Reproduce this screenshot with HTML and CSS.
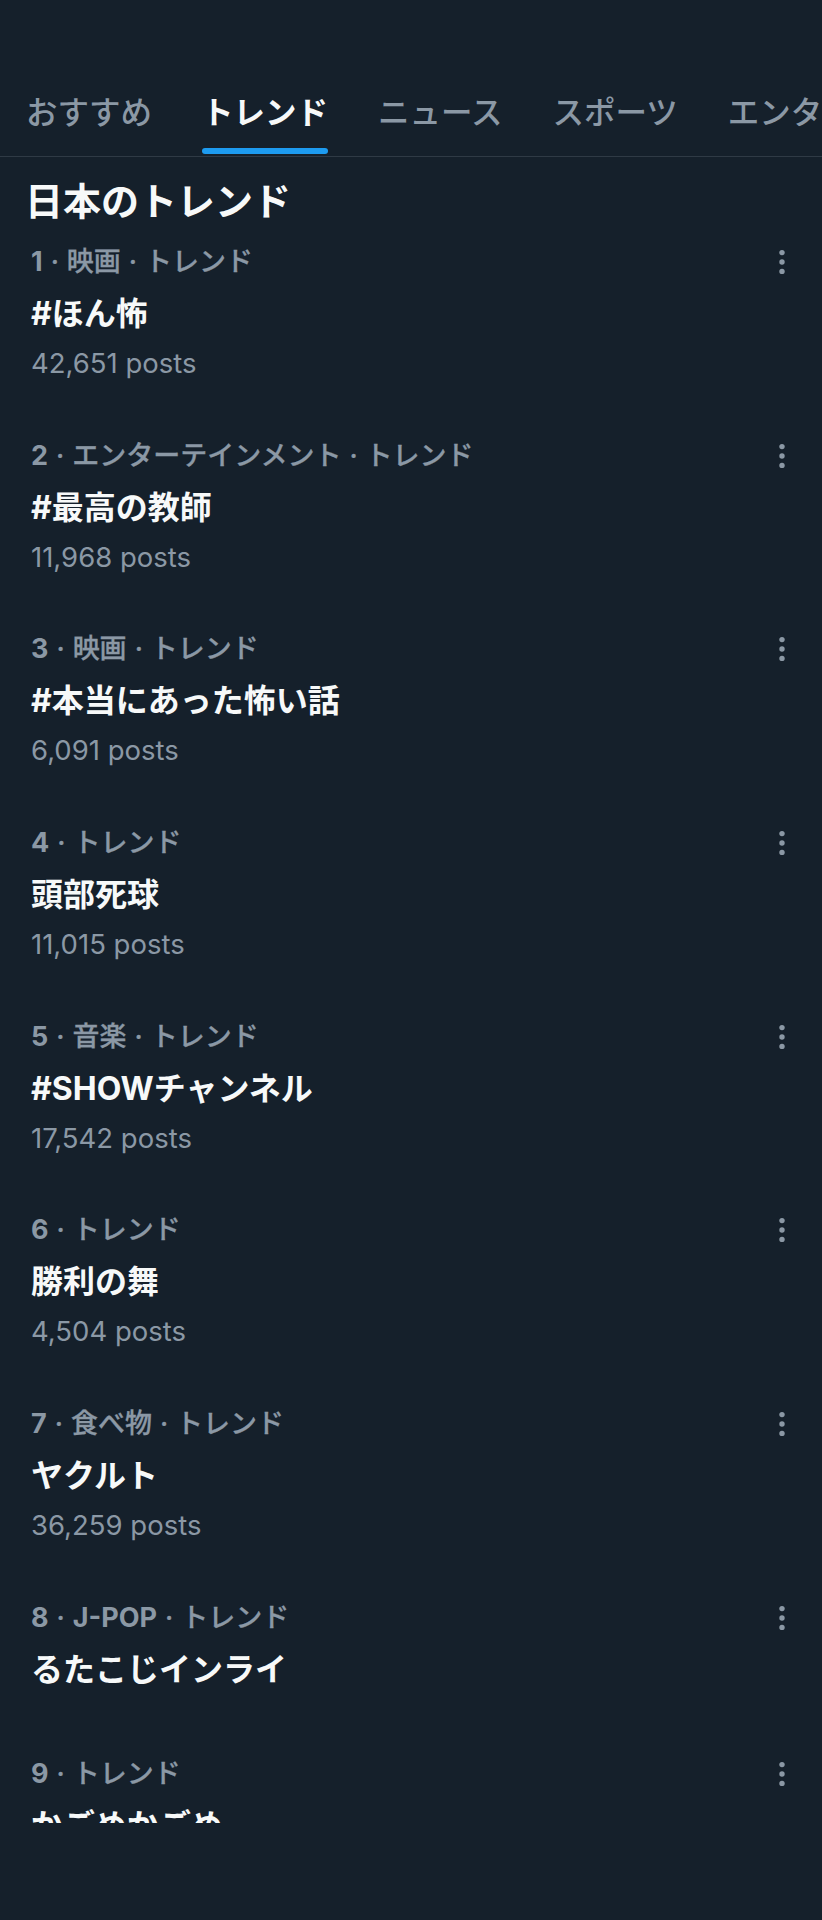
FILE: index.html
```html
<!DOCTYPE html>
<html lang="ja">
<head>
  <meta charset="UTF-8" />
  <meta name="viewport" content="width=device-width, initial-scale=1.0"/>
  <title>トレンド</title>
  <link rel="stylesheet" href="styles.css">
</head>
<body>
  <div class="statusbar"></div>

  <nav class="tabs">
    <a class="tab"><span class="tab-label">おすすめ</span></a>
    <a class="tab active"><span class="tab-label">トレンド</span></a>
    <a class="tab"><span class="tab-label">ニュース</span></a>
    <a class="tab"><span class="tab-label">スポーツ</span></a>
    <a class="tab"><span class="tab-label">エンターテインメント</span></a>
  </nav>

  <h2 class="section-title">日本のトレンド</h2>

  <div class="trends">
    <div class="trend">
      <div class="trend-meta">
        <span><b>1</b><span class="dot">·</span>映画<span class="dot">·</span>トレンド</span>
        <svg class="more" viewBox="0 0 20 44"><circle cx="10" cy="12.6" r="2.7"/><circle cx="10" cy="22" r="2.7"/><circle cx="10" cy="31.4" r="2.7"/></svg>
      </div>
      <div class="trend-name">#ほん怖</div>
      <div class="trend-count">42,651 posts</div>
    </div>

    <div class="trend">
      <div class="trend-meta">
        <span><b>2</b><span class="dot">·</span>エンターテインメント<span class="dot">·</span>トレンド</span>
        <svg class="more" viewBox="0 0 20 44"><circle cx="10" cy="12.6" r="2.7"/><circle cx="10" cy="22" r="2.7"/><circle cx="10" cy="31.4" r="2.7"/></svg>
      </div>
      <div class="trend-name">#最高の教師</div>
      <div class="trend-count">11,968 posts</div>
    </div>

    <div class="trend">
      <div class="trend-meta">
        <span><b>3</b><span class="dot">·</span>映画<span class="dot">·</span>トレンド</span>
        <svg class="more" viewBox="0 0 20 44"><circle cx="10" cy="12.6" r="2.7"/><circle cx="10" cy="22" r="2.7"/><circle cx="10" cy="31.4" r="2.7"/></svg>
      </div>
      <div class="trend-name">#本当にあった怖い話</div>
      <div class="trend-count">6,091 posts</div>
    </div>

    <div class="trend">
      <div class="trend-meta">
        <span><b>4</b><span class="dot">·</span>トレンド</span>
        <svg class="more" viewBox="0 0 20 44"><circle cx="10" cy="12.6" r="2.7"/><circle cx="10" cy="22" r="2.7"/><circle cx="10" cy="31.4" r="2.7"/></svg>
      </div>
      <div class="trend-name">頭部死球</div>
      <div class="trend-count">11,015 posts</div>
    </div>

    <div class="trend">
      <div class="trend-meta">
        <span><b>5</b><span class="dot">·</span>音楽<span class="dot">·</span>トレンド</span>
        <svg class="more" viewBox="0 0 20 44"><circle cx="10" cy="12.6" r="2.7"/><circle cx="10" cy="22" r="2.7"/><circle cx="10" cy="31.4" r="2.7"/></svg>
      </div>
      <div class="trend-name">#SHOWチャンネル</div>
      <div class="trend-count">17,542 posts</div>
    </div>

    <div class="trend">
      <div class="trend-meta">
        <span><b>6</b><span class="dot">·</span>トレンド</span>
        <svg class="more" viewBox="0 0 20 44"><circle cx="10" cy="12.6" r="2.7"/><circle cx="10" cy="22" r="2.7"/><circle cx="10" cy="31.4" r="2.7"/></svg>
      </div>
      <div class="trend-name">勝利の舞</div>
      <div class="trend-count">4,504 posts</div>
    </div>

    <div class="trend">
      <div class="trend-meta">
        <span><b>7</b><span class="dot">·</span>食べ物<span class="dot">·</span>トレンド</span>
        <svg class="more" viewBox="0 0 20 44"><circle cx="10" cy="12.6" r="2.7"/><circle cx="10" cy="22" r="2.7"/><circle cx="10" cy="31.4" r="2.7"/></svg>
      </div>
      <div class="trend-name">ヤクルト</div>
      <div class="trend-count">36,259 posts</div>
    </div>

    <div class="trend">
      <div class="trend-meta">
        <span><b>8</b><span class="dot">·</span><b>J-POP</b><span class="dot">·</span>トレンド</span>
        <svg class="more" viewBox="0 0 20 44"><circle cx="10" cy="12.6" r="2.7"/><circle cx="10" cy="22" r="2.7"/><circle cx="10" cy="31.4" r="2.7"/></svg>
      </div>
      <div class="trend-name">るたこじインライ</div>
    </div>

    <div class="trend">
      <div class="trend-meta">
        <span><b>9</b><span class="dot">·</span>トレンド</span>
        <svg class="more" viewBox="0 0 20 44"><circle cx="10" cy="12.6" r="2.7"/><circle cx="10" cy="22" r="2.7"/><circle cx="10" cy="31.4" r="2.7"/></svg>
      </div>
      <div class="trend-name">かごめかごめ</div>
    </div>
  </div>

  <div class="bottom-space"></div>
</body>
</html>
```

FILE: styles.css
```css
html, body {
  margin: 0;
  padding: 0;
}
body {
  height: 1920px;
  display: flex;
  flex-direction: column;
  overflow: hidden;
  background: #15202b;
  color: #f7f9f9;
  font-family: Inter, "Noto Sans CJK JP", sans-serif;
}
.statusbar {
  height: 60px;
  flex-shrink: 0;
}
.tabs {
  display: flex;
  padding-left: 1px;
  white-space: nowrap;
  overflow: hidden;
  border-bottom: 1px solid #2f3a45;
  flex-shrink: 0;
}
.tab {
  padding: 32px 25px 2px;
  font-family: "Noto Sans CJK JP", sans-serif;
  font-size: 31.5px;
  font-weight: 500;
  color: #8b98a5;
  flex-shrink: 0;
}
.tab-label {
  display: block;
  line-height: 36px;
}
.tab::after {
  content: "";
  display: block;
  height: 6px;
  margin-top: 20px;
  border-radius: 3px;
}
.tab.active {
  color: #f7f9f9;
  font-weight: 700;
}
.tab.active::after {
  background: #1d9bf0;
}
.section-title {
  margin: 26px 0 0;
  padding-left: 25px;
  font-size: 38px;
  line-height: 37px;
  font-weight: 700;
  flex-shrink: 0;
}
.trends {
  flex: 1;
  overflow: hidden;
}
.trend {
  padding: 20px 30px 31.7px 31px;
}
.trend-meta {
  display: flex;
  justify-content: space-between;
  align-items: center;
  font-size: 27px;
  line-height: 44px;
  font-weight: 500;
  color: #8b98a5;
  -webkit-text-stroke: 0.3px #8b98a5;
}
.trend-meta b {
  font-weight: 700;
  -webkit-text-stroke: 0;
}
.dot {
  margin: 0 8px;
}
.more {
  width: 20px;
  height: 44px;
  fill: #8b98a5;
}
.trend-name {
  font-size: 32px;
  line-height: 60px;
  font-weight: 700;
}
.trend-count {
  font-size: 27.5px;
  line-height: 38px;
  color: #8b98a5;
}
.bottom-space {
  height: 97px;
  flex-shrink: 0;
}
```
